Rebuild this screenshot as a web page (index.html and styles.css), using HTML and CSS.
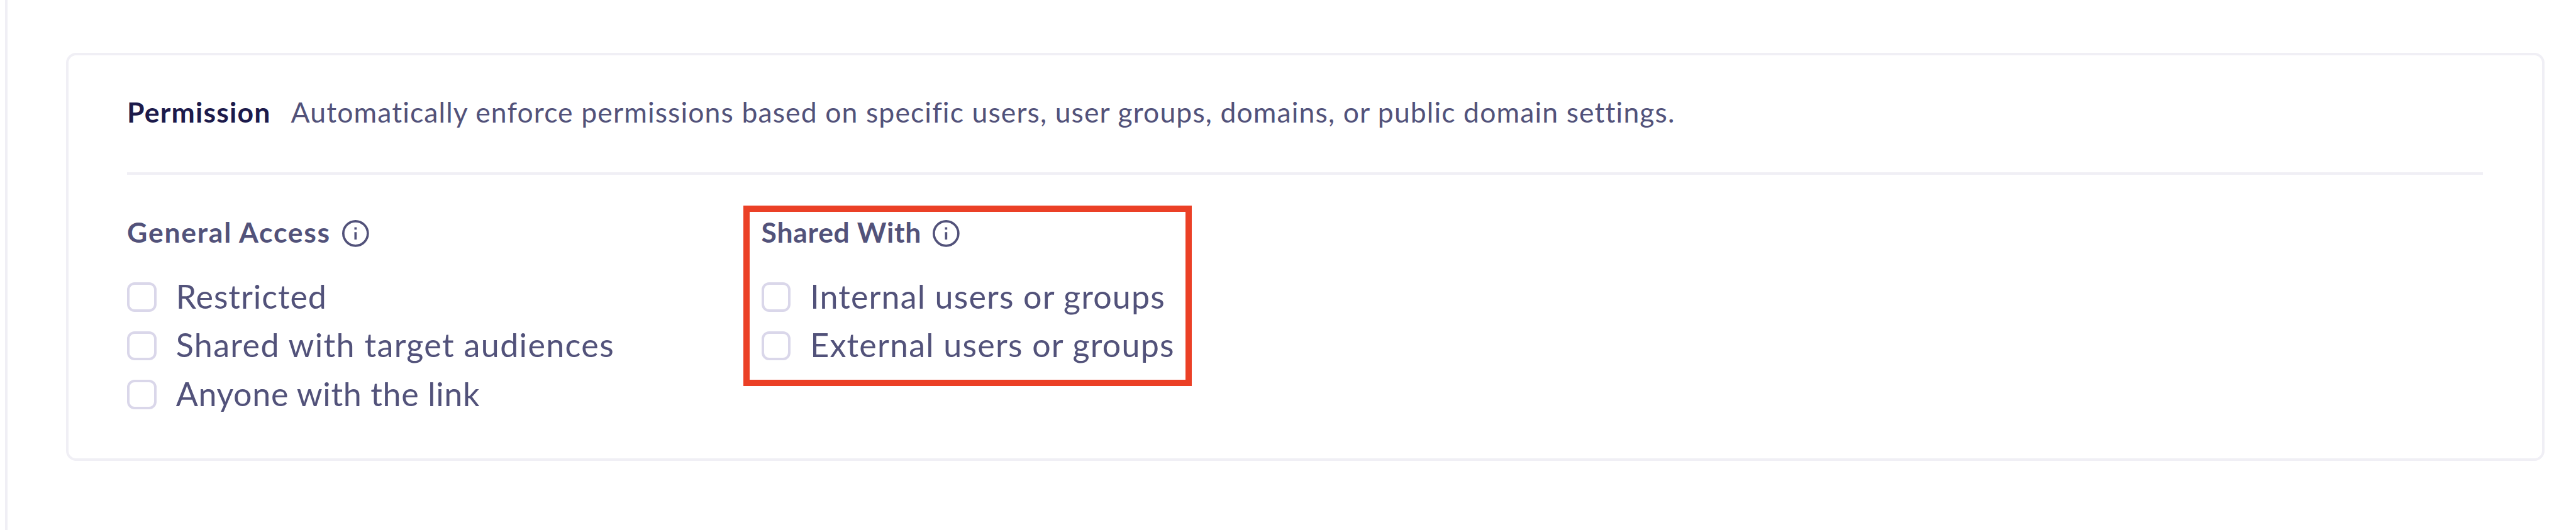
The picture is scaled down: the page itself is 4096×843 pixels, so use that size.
FILE: index.html
```
<!DOCTYPE html>
<html lang="en">
<head>
<meta charset="utf-8">
<title>Permission</title>
<link rel="stylesheet" href="styles.css">
</head>
<body>
<main class="page">
  <section class="card">
    <header class="card-header">
      <h2 class="title">Permission</h2>
      <p class="description">Automatically enforce permissions based on specific users, user groups, domains, or public domain settings.</p>
    </header>
    <div class="columns">
      <div class="column">
        <div class="group-head">
          <h3 class="group-title general">General Access</h3>
          <svg class="info" viewBox="0 0 44 44"><circle cx="22" cy="22" r="20.1"/><path d="M22 11.8v4M22 19.8v12.2"/></svg>
        </div>
        <label class="option"><input class="box" type="checkbox"><span class="label restricted">Restricted</span></label>
        <label class="option"><input class="box" type="checkbox"><span class="label audiences">Shared with target audiences</span></label>
        <label class="option"><input class="box" type="checkbox"><span class="label anyone">Anyone with the link</span></label>
      </div>
      <div class="column">
        <div class="group-head">
          <h3 class="group-title shared">Shared With</h3>
          <svg class="info" viewBox="0 0 44 44"><circle cx="22" cy="22" r="20.1"/><path d="M22 11.8v4M22 19.8v12.2"/></svg>
        </div>
        <label class="option"><input class="box" type="checkbox"><span class="label internal">Internal users or groups</span></label>
        <label class="option"><input class="box" type="checkbox"><span class="label external">External users or groups</span></label>
        <div class="highlight"></div>
      </div>
    </div>
  </section>
</main>
</body>
</html>
```
FILE: styles.css
```
* { box-sizing: border-box; }
html, body { margin: 0; height: 100%; background: #fff; }
body { font-family: Lato, "Open Sans", sans-serif; color: #52527a; padding-left: 8px; overflow: hidden; }
.page { height: 843px; border-left: 4px solid #f0eff5; padding: 83.5px 50.5px 0 93px; }
.card { height: 649px; border: 4px solid #f0eff5; border-radius: 16px; padding: 64px 93.1px 0; }
.card-header { display: flex; height: 126.5px; border-bottom: 4px solid #f0eff5; }
.title, .description, .group-title { margin: 0; font-size: 44.5px; line-height: 52px; white-space: nowrap; }
.title { width: 260.5px; color: #1c1a4b; font-weight: 700; letter-spacing: 1.2px; }
.description { font-weight: 400; letter-spacing: 1.11px; }
.columns { display: flex; padding-top: 64px; }
.column { position: relative; width: 1008.5px; }
.group-head { display: flex; align-items: center; gap: 17px; height: 52px; margin-bottom: 39.4px; }
.group-title { font-weight: 700; padding-top: 1px; }
.general { width: 325px; letter-spacing: 1.75px; }
.shared { width: 255.5px; letter-spacing: 0.7px; }
.info { width: 42.7px; height: 42.7px; margin-top: 6.4px; flex: none; fill: none; stroke: #52527a; stroke-width: 3.8; }
.option { display: flex; align-items: center; gap: 31px; height: 77.72px; }
.box { appearance: none; flex: none; width: 46.6px; height: 46.6px; margin: 0; border: 4px solid #dad7ea; border-radius: 12px; background: #fff; }
.label { font-size: 52px; line-height: 60px; padding-bottom: 3px; white-space: nowrap; }
.restricted { letter-spacing: 0.93px; }
.audiences { letter-spacing: 1.35px; }
.anyone { letter-spacing: 0.63px; }
.internal { letter-spacing: 1.14px; }
.external { letter-spacing: 1.21px; }
.highlight { position: absolute; left: -28.2px; top: 49px; width: 713px; height: 287px; margin-top: -64px; border: 10px solid #eb4026; pointer-events: none; }
```
